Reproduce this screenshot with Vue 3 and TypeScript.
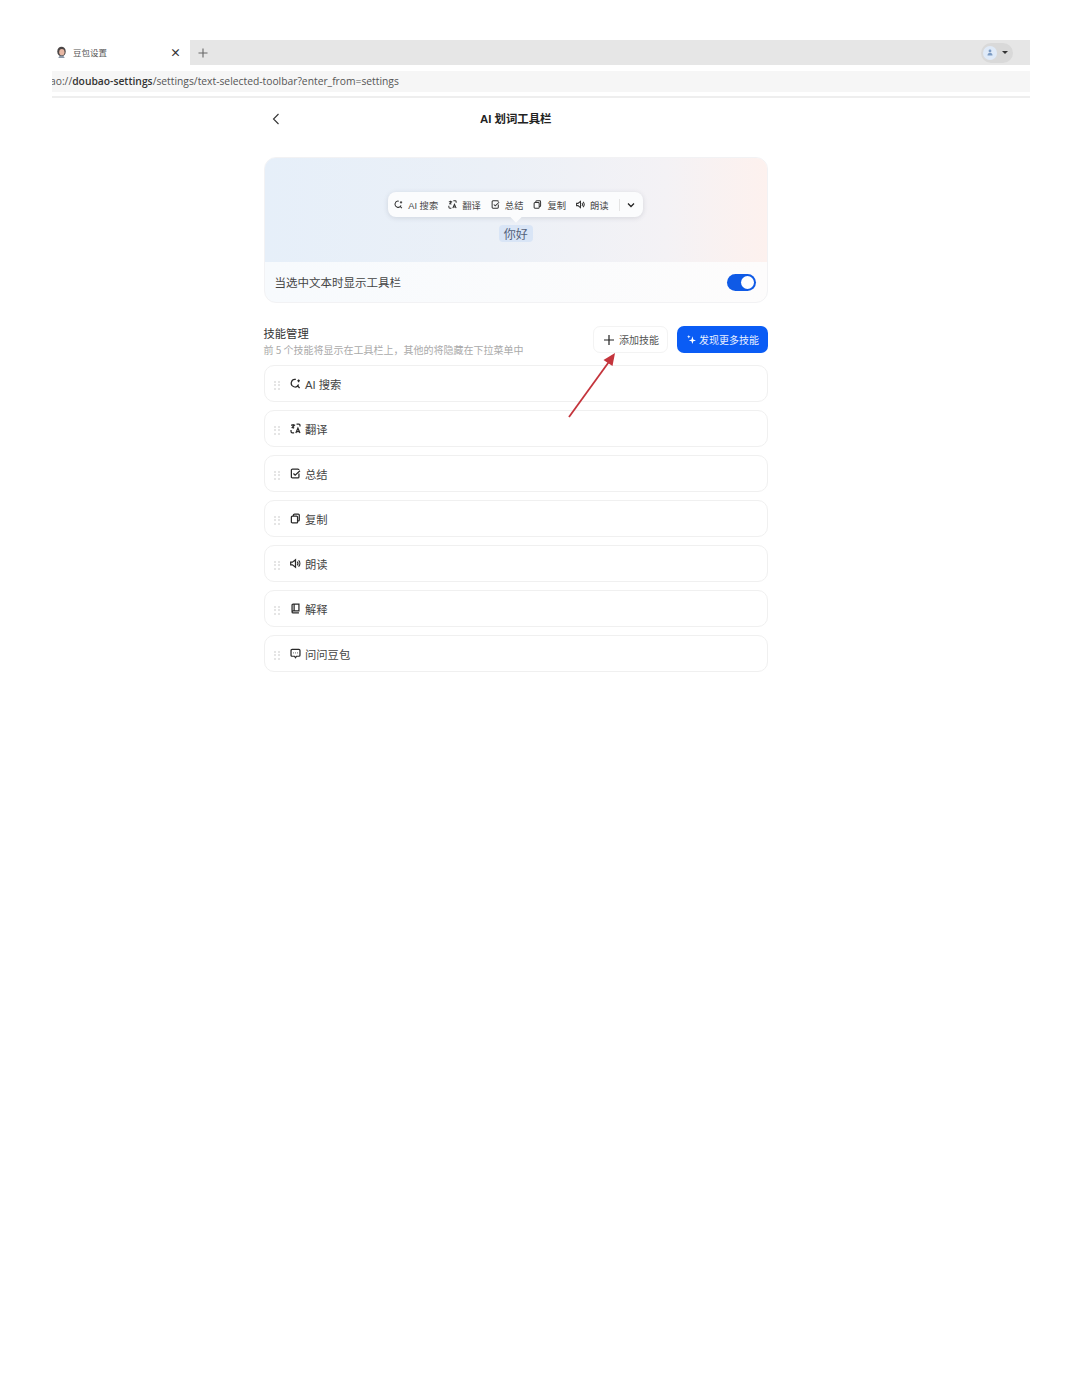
<template>
  <div class="page">
    <div class="tabs">
      <div class="tab">
        <svg class="favicon" width="11" height="13" viewBox="0 0 12 14">
          <ellipse cx="6" cy="6" rx="4.6" ry="5.4" fill="#4a4545" />
          <ellipse cx="6.400" cy="6.600" rx="2.900" ry="3.400" fill="#e8b8a4" />
          <path d="M2.500 13c.5-2 2-2.800 3.500-2.800S9 11 9.500 13z" fill="#8c98a8" />
        </svg>
        <span class="tab-title">豆包设置</span>
        <span class="tab-close">×</span>
      </div>
      <div class="tab-strip">
        <svg class="tab-plus" width="10" height="10" viewBox="0 0 10 10">
          <path d="M5 .5v9M.5 5h9" stroke="#666" stroke-width="1.100" />
        </svg>
        <div class="profile">
          <span class="avatar">
            <svg width="6" height="7" viewBox="0 0 6 7">
              <circle cx="3" cy="2" r="1.400" fill="#7d9cc4" />
              <path d="M.5 6.500c0-2 1-2.500 2.500-2.500s2.500.5 2.500 2.500z" fill="#7d9cc4" />
            </svg>
          </span>
          <span class="caret"></span>
        </div>
      </div>
    </div>
    <div class="address">
      <span class="url">ao://<b>doubao-settings</b>/settings/text-selected-toolbar?enter_from=settings</span>
    </div>
    <div class="divider"></div>

    <div class="content">
      <div class="header">
        <svg class="back" width="8" height="12" viewBox="0 0 8 12">
          <path d="M6.500 1 1.500 6l5 5" fill="none" stroke="#333" stroke-width="1.100" />
        </svg>
        <span class="header-title">AI 划词工具栏</span>
      </div>

      <div class="card">
        <div class="preview">
          <div class="toolbar">
            <div v-for="item in toolbarItems" :key="item.name" class="tool">
              <svg width="9" height="9" viewBox="0 0 16 16" fill="none" stroke="#333" stroke-width="1.800">
                <path v-for="d in item.paths" :key="d" :d="d" />
              </svg>
              <span>{{ item.name }}</span>
            </div>
            <span class="tool-sep"></span>
            <svg class="tool-more" width="8" height="6" viewBox="0 0 8 6">
              <path d="M1 1.500 4 4.500l3-3" fill="none" stroke="#222" stroke-width="1.300" />
            </svg>
          </div>
          <span class="notch"></span>
          <span class="selected">你好</span>
        </div>
        <div class="toggle-row">
          <span>当选中文本时显示工具栏</span>
          <span class="switch"><i></i></span>
        </div>
      </div>

      <div class="section-head">
        <div class="section-text">
          <div class="section-title">技能管理</div>
          <div class="section-sub">前 5 个技能将显示在工具栏上，其他的将隐藏在下拉菜单中</div>
        </div>
        <button class="btn-add">
          <svg width="10" height="10" viewBox="0 0 10 10">
            <path d="M5 0v10M0 5h10" stroke="#222" stroke-width="1.200" />
          </svg>
          添加技能
        </button>
        <button class="btn-more">
          <svg width="9" height="9" viewBox="0 0 10 10" fill="#fff">
            <path d="M6 1.500 7 5l3 1-3 1-1 3-1-3-3-1 3-1z" />
            <path d="M2 0l.5 1.500L4 2l-1.500.5L2 4l-.5-1.500L0 2l1.500-.5z" />
          </svg>
          发现更多技能
        </button>
      </div>

      <div class="skills">
        <div v-for="item in skills" :key="item.name" class="skill">
          <span class="grip"><i v-for="n in 6" :key="n"></i></span>
          <svg class="skill-icon" width="11" height="11" viewBox="0 0 16 16" fill="none" stroke="#2a2a2a" stroke-width="1.800">
            <path v-for="d in item.paths" :key="d" :d="d" />
          </svg>
          <span class="skill-name">{{ item.name }}</span>
        </div>
        <!-- annotation drawn on top of the screenshot -->
        <svg class="arrow" width="50" height="68" viewBox="0 0 50 68">
          <path d="M1 66 43 8" stroke="#c4343c" stroke-width="1.800" fill="none" />
          <path d="M47 2 44.500 15 35.500 9z" fill="#c4343c" />
        </svg>
      </div>
    </div>
  </div>
</template>

<script setup lang="ts">
interface Skill {
  name: string;
  paths: string[];
}

const skills: Skill[] = [
  { name: "AI 搜索", paths: ["M8.500 2.100A5.500 5.500 0 1 0 12.500 9.500", "M10.500 11 14 14.500", "M12.500 2v4M10.500 4h4"] },
  { name: "翻译", paths: ["M1.500 3h6M4.500 1.500V3M2.500 7.500 6.500 3", "M3 6l3 1.500", "M9.500 1.500h3.500a1.500 1.500 0 0 1 1.500 1.500v2", "M1.500 10v2.500A2 2 0 0 0 3.500 14.500H6", "M8.500 14.500l3-7 3 7M9.500 12.500h4"] },
  { name: "总结", paths: ["M13 8v5a1.500 1.500 0 0 1-1.500 1.500h-8A1.500 1.500 0 0 1 2 13V3a1.500 1.500 0 0 1 1.500-1.500h8A1.500 1.500 0 0 1 13 3", "M5 8l2.500 2.500L14.500 4"] },
  { name: "复制", paths: ["M5 4.500V3a1.500 1.500 0 0 1 1.500-1.500H12A1.500 1.500 0 0 1 13.500 3v7a1.500 1.500 0 0 1-1.500 1.500h-1", "M3.500 4.500h6A1.500 1.500 0 0 1 11 6v7.500a1 1 0 0 1-1 1H3.500A1.500 1.500 0 0 1 2 13V6a1.500 1.500 0 0 1 1.500-1.500z"] },
  { name: "朗读", paths: ["M1 6v4h2.500L8 13.500v-11L3.500 6z", "M10.500 5.500a3.500 3.500 0 0 1 0 5", "M12.500 3.500a6.500 6.500 0 0 1 0 9"] },
  { name: "解释", paths: ["M3 13V3a1.500 1.500 0 0 1 1.500-1.500H13v10H4.500A1.500 1.500 0 0 0 3 13a1.500 1.500 0 0 0 1.500 1.500H13", "M6 1.500v10"] },
  { name: "问问豆包", paths: ["M3 2h10a1.500 1.500 0 0 1 1.500 1.500v7A1.500 1.500 0 0 1 13 12H9.500L8 14l-1.500-2H3a1.500 1.500 0 0 1-1.500-1.500v-7A1.500 1.500 0 0 1 3 2z", "M5 7h.8M7.600 7h.8M10.200 7h.8"] },
];

const toolbarItems = skills.slice(0, 5);
</script>

<style>
html,
body {
  background: #fff;
}
</style>

<style scoped>
.page {
  box-sizing: border-box;
  width: 1080px;
  height: 1381px;
  padding: 40px 50px 0 52px;
  background: #fff;
  color: #2b2b2b;
  font-family: "Noto Sans CJK SC", "Noto Sans", sans-serif;
}

.tabs {
  display: flex;
  height: 25px;
}

.tab {
  display: flex;
  align-items: center;
  width: 138px;
  padding: 0 9px 0 4px;
  box-sizing: border-box;
}

.favicon {
  flex: none;
}

.tab-title {
  margin: -1px 0 0 6px;
  font-size: 8.500px;
  color: #555;
}

.tab-close {
  margin-left: auto;
  font-size: 11px;
  font-weight: 700;
  color: #333;
  line-height: 1;
}

.tab-strip {
  flex: 1;
  display: flex;
  align-items: center;
  padding: 0 17px 0 8px;
  background: #e6e6e6;
}

.profile {
  display: flex;
  align-items: center;
  gap: 5px;
  margin-left: auto;
  height: 20px;
  padding: 0 5px 0 2px;
  border-radius: 10px;
  background: #d9d9d9;
}

.avatar {
  display: flex;
  align-items: center;
  justify-content: center;
  width: 14px;
  height: 14px;
  border-radius: 50%;
  background: #dfeaf8;
}

.caret {
  width: 0;
  height: 0;
  border-left: 3px solid transparent;
  border-right: 3px solid transparent;
  border-top: 3px solid #333;
}

.address {
  display: flex;
  align-items: center;
  box-sizing: border-box;
  height: 21px;
  margin-top: 6px;
  padding-bottom: 2px;
  background: #f6f6f6;
  overflow: hidden;
}

.url {
  margin-left: -2px;
  font-family: "Open Sans", "Noto Sans", sans-serif;
  font-size: 10.300px;
  color: #555;
  white-space: nowrap;
}

.url b {
  font-weight: 600;
  color: #333;
}

.divider {
  height: 2px;
  margin-top: 4px;
  background: #eeeeee;
}

.content {
  width: 504.500px;
  margin-left: 211.500px;
}

.header {
  position: relative;
  display: flex;
  align-items: center;
  justify-content: center;
  height: 42px;
}

.back {
  position: absolute;
  left: 8px;
  top: 15px;
}

.header-title {
  font-family: "Liberation Sans", "Noto Sans CJK SC", sans-serif;
  font-size: 11.400px;
  font-weight: 700;
  color: #222;
  margin-top: -3px;
}

.card {
  margin-top: 17px;
  border: 1px solid #f2f2f4;
  border-radius: 12px;
  overflow: hidden;
  background: linear-gradient(90deg, #f7fafd, #fdfcfc);
}

.preview {
  display: flex;
  flex-direction: column;
  align-items: center;
  height: 104px;
  padding-top: 34px;
  box-sizing: border-box;
  background: linear-gradient(90deg, #e6eff9 0%, #ebf0f7 45%, #f4f2f5 80%, #fdf1ee 100%);
}

.toolbar {
  display: flex;
  align-items: center;
  box-sizing: border-box;
  width: 255px;
  height: 25px;
  padding: 0 8px 0 6px;
  border-radius: 8px;
  background: #fbfcfd;
  box-shadow: 0 1px 5px rgba(60, 70, 90, 0.16);
  font-family: "Liberation Sans", "Noto Sans CJK SC", sans-serif;
  font-size: 9.300px;
  color: #4a4a4a;
}

.tool {
  display: flex;
  align-items: center;
  gap: 5px;
  margin-right: 10px;
}

.tool-sep {
  width: 1px;
  height: 12px;
  background: #e4e4e4;
  margin-right: 7px;
}

.notch {
  width: 8px;
  height: 8px;
  margin-top: -4px;
  transform: rotate(45deg);
  background: #fbfcfd;
}

.selected {
  margin-top: 4px;
  padding: 0 5px;
  height: 17px;
  line-height: 17px;
  border-radius: 4px;
  background: #d9e5f6;
  font-size: 12px;
  color: #54627a;
}

.toggle-row {
  display: flex;
  align-items: center;
  justify-content: space-between;
  height: 40px;
  padding: 0 11px 0 10px;
  font-size: 11.500px;
  color: #444;
}

.switch {
  position: relative;
  display: block;
  width: 29px;
  height: 17px;
  border-radius: 9px;
  background: #0f5ae6;
}

.switch i {
  position: absolute;
  right: 2px;
  top: 2px;
  width: 13px;
  height: 13px;
  border-radius: 50%;
  background: #fff;
}

.section-head {
  display: flex;
  align-items: center;
  height: 62px;
  gap: 9px;
}

.section-text {
  margin-right: auto;
  margin-top: 14px;
}

.section-title {
  font-size: 11.300px;
  line-height: 15px;
  color: #333;
}

.section-sub {
  margin-top: 2px;
  font-size: 10px;
  line-height: 13px;
  color: #aaa;
  white-space: nowrap;
}

.btn-add,
.btn-more {
  display: flex;
  flex: none;
  align-items: center;
  height: 27px;
  border-radius: 7px;
  font-family: inherit;
  font-size: 10px;
  cursor: pointer;
  margin-top: 11px;
}

.btn-add {
  gap: 5px;
  width: 75px;
  padding: 0 0 0 10px;
  border: 1px solid #f3f3f3;
  background: #fff;
  color: #555;
}

.btn-more {
  gap: 3px;
  width: 91px;
  padding: 0 0 0 10px;
  border: none;
  background: #0a5cf5;
  color: #e8efff;
}

.skills {
  position: relative;
  display: flex;
  flex-direction: column;
  gap: 8px;
}

.skill {
  display: flex;
  align-items: center;
  box-sizing: border-box;
  height: 37px;
  padding-left: 9.500px;
  border: 1px solid #f0f0f0;
  border-radius: 10px;
  background: #fff;
}

.grip {
  display: grid;
  grid-template-columns: 2px 2px;
  grid-auto-rows: 2px;
  gap: 1.500px;
  margin: 3px 10px 0 0;
}

.grip i {
  display: block;
  background: #dcdcdc;
  border-radius: 50%;
}

.skill-icon {
  flex: none;
  margin-right: 4.500px;
}

.skill-name {
  font-family: "Liberation Sans", "Noto Sans CJK SC", sans-serif;
  font-size: 11.300px;
  color: #444;
}

.arrow {
  position: absolute;
  left: 304.500px;
  top: -14px;
}
</style>
